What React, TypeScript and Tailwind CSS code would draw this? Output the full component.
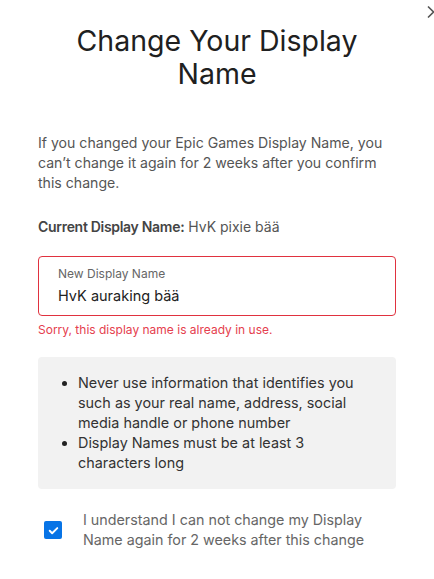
export default function App() {
  return (
    <div className="relative h-[579px] w-[434px] overflow-hidden bg-white font-['Inter','Noto_Sans',sans-serif]">
      <button className="absolute right-[-7px] top-[2px] h-5 w-5 text-[#555]">
        <ChevronIcon className="h-5 w-5" />
      </button>
      <div className="flex flex-col px-[38px] pt-[24px]">
        <h1 className="mx-auto w-[300px] text-center text-[28.5px] leading-[33px] font-normal text-[#202020]">
          Change Your Display Name
        </h1>
        <p className="mt-[43px] text-[14.1px] leading-[20px] text-[#555]">
          If you changed your Epic Games Display Name, you can’t change it again for 2 weeks after you confirm this change.
        </p>
        <p className="mt-[24px] text-[14px] leading-[20px] text-[#444]">
          <span className="font-semibold tracking-[-0.3px]">Current Display Name:</span>{" "}
          <span className="text-[#555]">HvK pixie bää</span>
        </p>
        <div className="mt-[19px] flex h-[60px] flex-col justify-center rounded-[4px] border border-[#e0323f] px-[19px]">
          <span className="text-[12px] leading-[16px] text-[#666]">New Display Name</span>
          <span className="mt-[4px] text-[14.5px] leading-[20px] text-[#222]">HvK auraking bää</span>
        </div>
        <p className="mt-[6px] text-[12px] leading-[16px] text-[#e5404e]">
          Sorry, this display name is already in use.
        </p>
        <div className="mt-[19px] rounded-[4px] bg-[#f2f2f2] pb-[16px] pl-[40px] pr-[16px] pt-[16px]">
          <ul className="list-disc text-[14.4px] leading-[20px] text-[#333] marker:text-[#222]">
            <li>Never use information that identifies you such as your real name, address, social media handle or phone number</li>
            <li>Display Names must be at least 3 characters long</li>
          </ul>
        </div>
        <label className="mt-[21px] flex items-center gap-[21px] pl-[6px]">
          <span className="flex h-[18px] w-[18px] shrink-0 items-center justify-center rounded-[2px] bg-[#0874e6]">
            <svg viewBox="0 0 24 24" className="h-[13px] w-[13px]" fill="none" stroke="white" strokeWidth="3.5" strokeLinecap="round" strokeLinejoin="round">
              <path d="M5 12.5l4.5 4.5L19 7.5" />
            </svg>
          </span>
          <span className="text-[14.3px] leading-[20px] text-[#666]">
            I understand I can not change my Display Name again for 2 weeks after this change
          </span>
        </label>
      </div>
    </div>
  )
}

function ChevronIcon(props: React.SVGProps<SVGSVGElement>) {
  return (
    <svg {...props} viewBox="0 0 24 24" fill="none" stroke="currentColor" strokeWidth="2" strokeLinecap="round" strokeLinejoin="round">
      <path d="m9 18 6-6-6-6" />
    </svg>
  )
}
